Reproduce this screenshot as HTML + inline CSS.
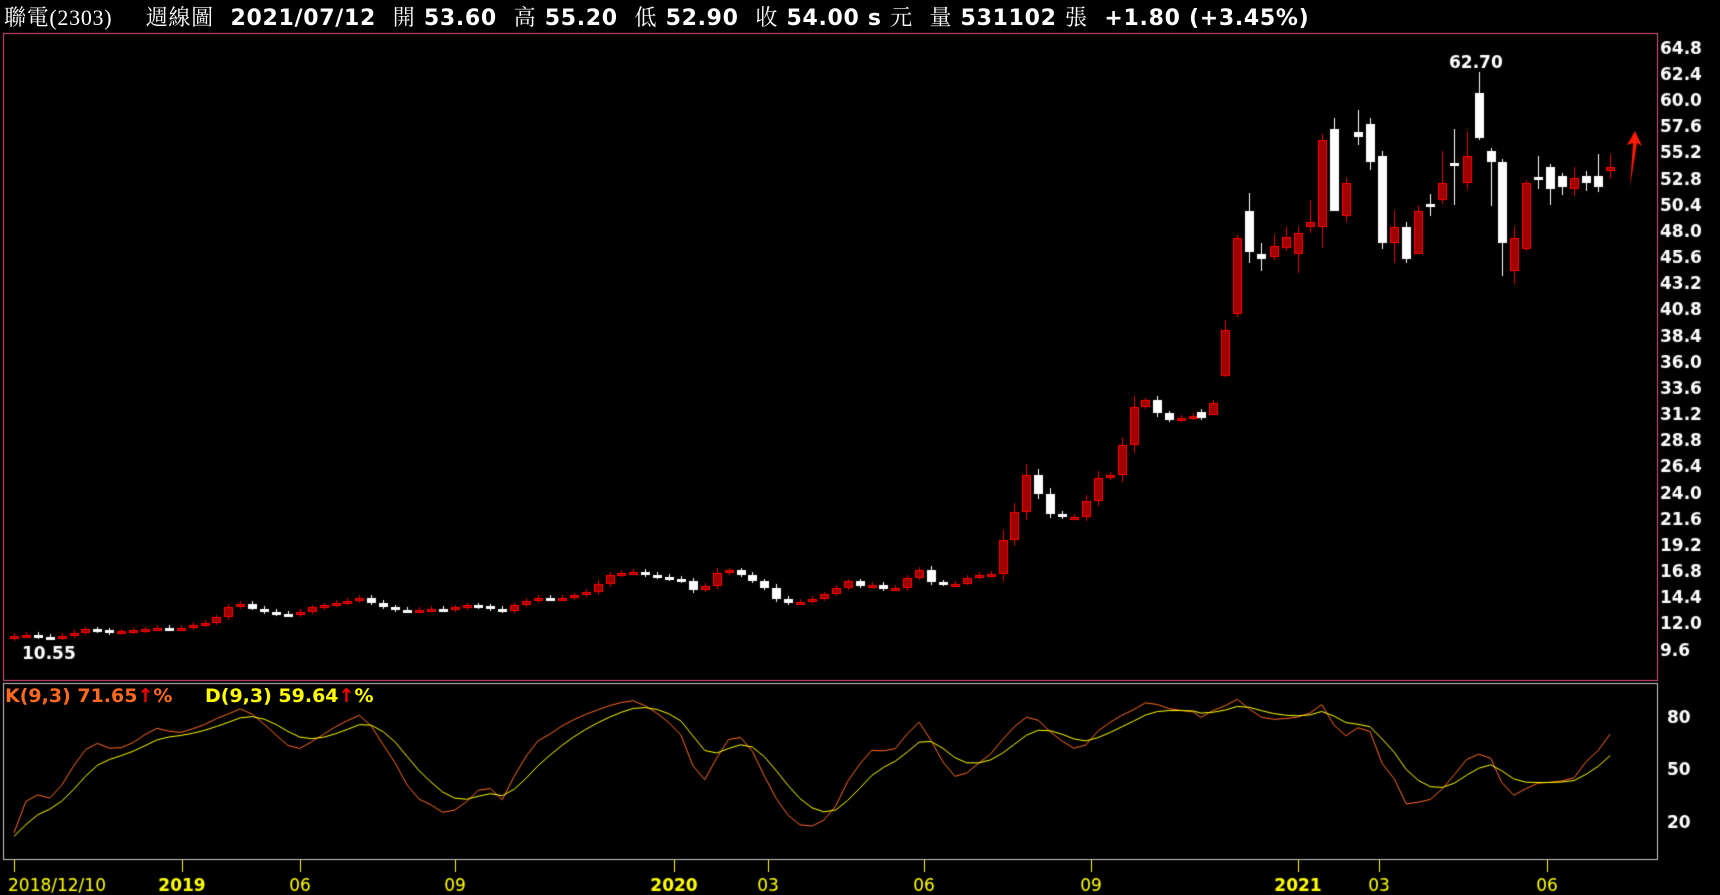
<!DOCTYPE html>
<html><head><meta charset="utf-8">
<style>
html,body{margin:0;padding:0;background:#000;width:1720px;height:895px;overflow:hidden}
#hdr{position:absolute;left:4px;top:1px;color:#fff;font:bold 22px "DejaVu Sans","Noto Sans CJK TC",sans-serif;white-space:pre;letter-spacing:0.7px}
#hdr .s{font-family:"Liberation Serif","Noto Serif CJK SC",serif;font-weight:normal}
canvas{position:absolute;left:0;top:0}
.t{position:absolute;font:bold 19px "DejaVu Sans",sans-serif;white-space:pre}
</style></head><body>
<canvas id="c" width="1720" height="895"></canvas>
<div id="hdr"><span class="s">聯電(2303)</span>    <span class="s">週線圖</span>  2021/07/12  <span class="s">開</span> 53.60  <span class="s">高</span> 55.20  <span class="s">低</span> 52.90  <span class="s">收</span> 54.00 s <span class="s">元</span>  <span class="s">量</span> 531102 <span class="s">張</span>  +1.80 (+3.45%)</div>
<div class="t" style="left:5px;top:685px;color:#ff6a20">K(9,3) 71.65<span style="color:#f00">↑</span>%</div>
<div class="t" style="left:205px;top:685px;color:#ffff00">D(9,3) 59.64<span style="color:#f00">↑</span>%</div>
<script>
const c=document.getElementById('c'),g=c.getContext('2d');
const C=[11.0,11.1,10.9,10.8,11.0,11.3,11.6,11.5,11.3,11.4,11.5,11.6,11.7,11.6,11.7,12.0,12.2,12.7,
13.6,13.9,13.5,13.2,13.0,12.9,13.2,13.6,13.8,14.0,14.2,14.5,14.0,
13.6,13.4,13.3,13.4,13.5,13.4,13.6,13.8,13.7,13.5,13.3,13.8,14.2,14.5,14.4,14.5,14.7,15.0,15.8,16.6,
16.8,16.9,16.6,16.4,16.2,16.0,15.2,15.6,16.8,17.0,16.6,16.0,15.4,
14.4,14.0,14.1,14.4,14.8,15.4,16.0,15.6,15.7,15.3,15.4,16.3,17.0,15.9,15.8,15.8,16.3,
16.6,16.7,19.8,22.4,25.8,24.0,22.2,21.9,21.9,23.4,
25.5,25.8,28.5,32.0,32.6,31.4,30.8,31.0,31.2,32.6,39.6,47.3];
const X0=i=>14+i*11.91;
const Y=p=>49.4+(64.8-p)*10.9;
let S=[];
for(let i=0;i<C.length;i++){
 let x=X0(i); if(x>=1196)break;
 let o=i?C[i-1]:10.9,cl=C[i];
 if(Math.abs(o-cl)<0.05)o=cl-0.05;
 let w=Math.max(0.15,Math.abs(cl-o)*0.25)+0.1;
 let h=Math.max(o,cl)+w,l=Math.min(o,cl)-w*0.8;
 if(i==0)l=10.55;
 S.push({x,o,c:cl,h,l});
}
const R=[[1095,31.5,31.0,31.8,30.8],[1106,31.3,32.4,32.6,31.2],[1117,34.8,39.1,40,34.8],[1128,40.5,47.5,47.8,40.3],
[1139,50,46.2,51.6,45.2],[1150,46,45.6,47,44.4],[1161,45.8,46.8,47.8,45.5],[1172,46.6,47.6,48.5,46.3],
[1183,46,48,48.5,44.3],[1194,48.5,49,51,48],[1205,48.5,56.5,57,46.5],[1216,57.5,50,58.5,50],
[1227,49.5,52.5,53,49],[1238,57.2,56.8,59.2,56],[1249,58,54.5,58.5,53.7],[1260,55,47,55.5,46.5],
[1271,47,48.5,50,45.2],[1282,48.5,45.6,49,45.2],[1293,46,50,50.5,46],[1304,50.6,50.4,51.5,49.5],
[1315,51,52.5,55.5,50.6],[1326,54.4,54.2,57.5,50.5],[1337,52.5,55,57.2,52],[1348,60.8,56.7,62.7,56.5],
[1359,55.5,54.5,55.8,50.5],[1369,54.5,47,54.7,44],[1380,44.5,47.5,48.5,43.3],[1391,46.5,52.5,52.8,46.3],
[1402,53.1,52.9,55,52],[1413,54,52,54.3,50.5],[1424,53.2,52.2,53.5,51.5],[1435,52,53,54,51.3],
[1446,53.2,52.5,53.6,51.8],[1457,53.2,52.2,55.2,51.7],[1468,53.6,54,55.2,52.9]];
R.forEach(r=>S.push({x:r[0]*1.0969,o:r[1],c:r[2],h:r[3],l:r[4]}));
g.strokeStyle='#e0508a';g.lineWidth=1;g.strokeRect(3.5,33.5,1654,647);
g.strokeStyle='#c8c8c8';g.strokeRect(3.5,683.5,1654,176);
g.font='bold 17px "DejaVu Sans",sans-serif';g.fillStyle='#fff';g.textBaseline='middle';
for(let k=0;k<=23;k++){let p=64.8-k*2.4;g.fillText(p.toFixed(1),1660,Y(p));}
[[80,718.5],[50,771],[20,824]].forEach(a=>g.fillText(a[0],1667,a[1]));
S.forEach(s=>{
 let x=Math.round(s.x),up=s.c>=s.o;
 g.fillStyle=up?'#e00000':'#fff';
 g.fillRect(x,Math.round(Y(s.h)),1,Math.round(Y(s.l)-Y(s.h)));
 let t=Math.round(Y(Math.max(s.o,s.c))),b=Math.round(Y(Math.min(s.o,s.c)));
 if(b-t<3)b=t+3;
 if(up){g.fillStyle='#ff0000';g.fillRect(x-4,t,9,b-t);g.fillStyle='#a00000';g.fillRect(x-3,t+1,7,Math.max(0,b-t-2));}
 else{g.fillStyle='#fff';g.fillRect(x-4,t,9,b-t);}
});
g.fillStyle='#fff';g.textBaseline='alphabetic';
g.fillText('62.70',1449,68);g.fillText('10.55',22,659);
g.fillStyle='#ff1a00';g.beginPath();g.moveTo(1635,131);g.lineTo(1642,146);g.lineTo(1637,143);g.lineTo(1630,187);g.lineTo(1633,143);g.lineTo(1627,145);g.closePath();g.fill();
let K=[],D=[],k=15,d=12;
for(let i=0;i<S.length;i++){let a=Math.max(0,i-8),hh=-1e9,ll=1e9;for(let j=a;j<=i;j++){hh=Math.max(hh,S[j].h);ll=Math.min(ll,S[j].l);}
 let rsv=hh>ll?(S[i].c-ll)/(hh-ll)*100:50;if(i==0)rsv=15;
 k=k*2/3+rsv/3;d=d*2/3+k/3;K.push(k);D.push(d);}
const KY=v=>718.5+(80-v)*1.758;
function line(a,col){g.strokeStyle=col;g.lineWidth=1;g.beginPath();a.forEach((v,i)=>{let y=KY(v);i?g.lineTo(S[i].x,y):g.moveTo(S[i].x,y)});g.stroke();}
line(K,'#ff6a20');line(D,'#ffff00');
g.strokeStyle='#ffff00';g.fillStyle='#ffff00';
const xl=[[14,'2018/12/10',0],[182,'2019',1],[300,'06',0],[455,'09',0],[674,'2020',1],[768,'03',0],[924,'06',0],[1091,'09',0],[1298,'2021',1],[1379,'03',0],[1547,'06',0]];
xl.forEach(a=>{g.beginPath();g.moveTo(a[0]+.5,860);g.lineTo(a[0]+.5,872);g.stroke();
 g.font=(a[2]?'bold ':'')+'17px "DejaVu Sans",sans-serif';
 let w=g.measureText(a[1]).width;let x=a[0]==14?8:a[0]-w/2;g.fillText(a[1],x,891);});
</script>
</body></html>
